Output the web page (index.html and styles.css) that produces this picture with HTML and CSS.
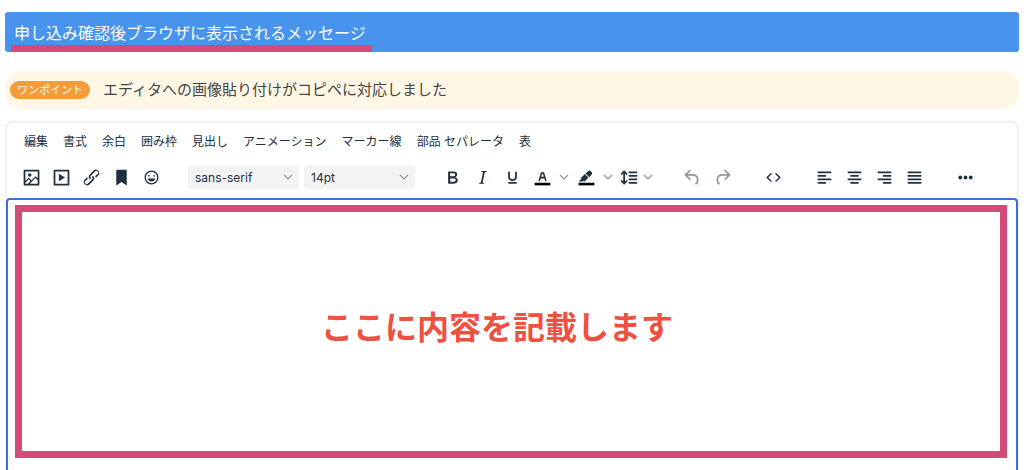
FILE: index.html
```
<!doctype html>
<html lang="ja">

<head>
  <meta charset="UTF-8" />
  <meta name="viewport" content="width=device-width, initial-scale=1.0" />
  <title>メッセージ編集</title>
  <link rel="stylesheet" href="styles.css">
</head>

<body>
  <h1 class="section-title"><span class="title-text">申し込み確認後ブラウザに表示されるメッセージ</span></h1>

  <p class="tip">
    <span class="tip-label">ワンポイント</span>
    <span>エディタへの画像貼り付けがコピペに対応しました</span>
  </p>

  <main class="editor">
    <div class="menubar" role="menubar">
      <button type="button" role="menuitem">編集</button>
      <button type="button" role="menuitem">書式</button>
      <button type="button" role="menuitem">余白</button>
      <button type="button" role="menuitem">囲み枠</button>
      <button type="button" role="menuitem">見出し</button>
      <button type="button" role="menuitem">アニメーション</button>
      <button type="button" role="menuitem">マーカー線</button>
      <button type="button" role="menuitem">部品 セパレータ</button>
      <button type="button" role="menuitem">表</button>
    </div>

    <div class="toolbar" role="toolbar">
      <div class="group">
        <button type="button" class="tool" aria-label="画像">
          <svg viewBox="0 0 24 24"><path fill-rule="evenodd" d="m5 15.7 3.3-3.2c.3-.3.7-.3 1 0L12 15l4.1-4c.3-.4.8-.4 1 0l2 1.9V5H5v10.7ZM5 18v1h3l2.8-2.9-2-2L5 17.9Zm14-3-2.5-2.4-6.4 6.4H19v-4ZM4 3h16c.6 0 1 .4 1 1v16c0 .6-.4 1-1 1H4a1 1 0 0 1-1-1V4c0-.6.4-1 1-1Zm6 8a2 2 0 1 0 0-4 2 2 0 0 0 0 4Z"/></svg>
        </button>
        <button type="button" class="tool" aria-label="動画">
          <svg viewBox="0 0 24 24"><path fill-rule="evenodd" d="M4 3h16c.6 0 1 .4 1 1v16c0 .6-.4 1-1 1H4a1 1 0 0 1-1-1V4c0-.6.4-1 1-1Zm1 2v14h14V5H5Zm4 2.600 7 4.400-7 4.400z"/></svg>
        </button>
        <button type="button" class="tool" aria-label="リンク">
          <svg viewBox="0 0 24 24"><path d="M6.200 12.300a1 1 0 0 1 1.400 1.400l-2 2a2 2 0 1 0 2.600 2.800l4.800-4.800a1 1 0 0 0 0-1.400 1 1 0 1 1 1.400-1.300 2.900 2.900 0 0 1 0 4L9.600 20a3.900 3.900 0 0 1-5.500-5.500l2-2Zm11.600-.6a1 1 0 0 1-1.400-1.400l2-2a2 2 0 1 0-2.600-2.800L11 10.300a1 1 0 0 0 0 1.400A1 1 0 1 1 9.600 13a2.900 2.900 0 0 1 0-4L14.400 4a3.900 3.900 0 0 1 5.500 5.500l-2 2Z"/></svg>
        </button>
        <button type="button" class="tool" aria-label="アンカー">
          <svg viewBox="0 0 24 24"><path d="M6 4v17l6-4 6 4V4c0-.6-.4-1-1-1H7a1 1 0 0 0-1 1Z"/></svg>
        </button>
        <button type="button" class="tool" aria-label="絵文字">
          <svg viewBox="0 0 24 24"><path fill-rule="evenodd" d="M9 11c.6 0 1-.4 1-1s-.4-1-1-1a1 1 0 0 0-1 1c0 .6.4 1 1 1Zm6 0c.6 0 1-.4 1-1s-.4-1-1-1a1 1 0 0 0-1 1c0 .6.4 1 1 1Zm-3 5.500c2.100 0 4-1.500 4.400-3.500H7.600c.5 2 2.300 3.500 4.400 3.500ZM12 4a8 8 0 1 0 0 16 8 8 0 0 0 0-16Zm0 14.500a6.500 6.500 0 1 1 0-13 6.500 6.500 0 0 1 0 13Z"/></svg>
        </button>
      </div>

      <div class="group selects">
        <div class="select-wrap">
          <select aria-label="フォント"><option>sans-serif</option></select>
          <svg class="chevron" viewBox="0 0 10 6"><path d="m1 1 4 4 4-4"/></svg>
        </div>
        <div class="select-wrap">
          <select aria-label="文字サイズ"><option>14pt</option></select>
          <svg class="chevron" viewBox="0 0 10 6"><path d="m1 1 4 4 4-4"/></svg>
        </div>
      </div>

      <div class="group">
        <button type="button" class="tool" aria-label="太字">
          <svg viewBox="0 0 24 24"><path fill-rule="evenodd" d="M7.800 19c-.3 0-.5 0-.6-.2l-.2-.5V5.700c0-.2 0-.4.2-.5l.6-.2h5c1.500 0 2.700.3 3.500 1 .7.600 1.100 1.400 1.100 2.500a3 3 0 0 1-.6 1.900c-.4.600-1 1-1.600 1.200.4.100.9.300 1.300.600s.8.700 1 1.200c.4.400.5 1 .5 1.600 0 1.300-.4 2.300-1.300 3-.8.700-2.100 1-3.800 1H7.800Zm5-8.300c.6 0 1.200-.1 1.600-.5.400-.3.600-.7.600-1.300 0-1.100-.8-1.700-2.300-1.700H9.300v3.500h3.400Zm.5 6c.7 0 1.300-.1 1.700-.4.400-.4.600-.9.600-1.500s-.2-1-.7-1.400c-.4-.3-1-.4-2-.4H9.400v3.800h4Z"/></svg>
        </button>
        <button type="button" class="tool" aria-label="斜体">
          <svg viewBox="0 0 24 24"><path d="m16.700 4.700-.1.900h-.3c-.6 0-1 0-1.400.3-.3.300-.4.600-.5 1.100l-2.100 9.800v.6c0 .5.400.8 1.400.8h.2l-.2.800H8l.2-.8h.2c1.100 0 1.800-.5 2-1.500l2-9.800.1-.5c0-.6-.4-.8-1.400-.8h-.3l.2-.9h5.700Z"/></svg>
        </button>
        <button type="button" class="tool" aria-label="下線">
          <svg viewBox="0 0 24 24"><path d="M16 5c.6 0 1 .4 1 1v5.500a4 4 0 0 1-.4 1.800l-1 1.400a5.300 5.300 0 0 1-5.500 1 5 5 0 0 1-1.600-1c-.5-.4-.8-.9-1.100-1.400a4 4 0 0 1-.4-1.800V6c0-.6.4-1 1-1s1 .4 1 1v5.500c0 .3 0 .6.2 1l.6.700a3.300 3.300 0 0 0 2.200.8 3.400 3.400 0 0 0 2.200-.8c.3-.2.400-.5.600-.8l.2-.9V6c0-.6.4-1 1-1ZM8 17h8c.6 0 1 .4 1 1s-.4 1-1 1H8a1 1 0 0 1 0-2Z"/></svg>
        </button>
        <button type="button" class="tool" aria-label="文字色">
          <svg viewBox="0 0 24 24"><path class="swatch" d="M3 18h18v3H3z"/><path fill-rule="evenodd" d="M8.700 16h-.8a.5.500 0 0 1-.5-.6l2.700-9c.1-.3.300-.4.500-.4h2.800c.2 0 .4.100.5.400l2.700 9a.5.500 0 0 1-.5.600h-.8a.5.500 0 0 1-.4-.4l-.7-2.200c0-.3-.3-.4-.5-.4h-3.400c-.2 0-.4.100-.5.400l-.7 2.200c0 .3-.2.400-.4.400Zm2.600-7.600-.6 2a.5.500 0 0 0 .5.600h1.600a.5.500 0 0 0 .5-.6l-.6-2c0-.3-.3-.4-.5-.4h-.4c-.2 0-.4.100-.5.400Z"/></svg>
        </button>
        <button type="button" class="tool-arrow" aria-label="文字色を選択">
          <svg class="chevron" viewBox="0 0 10 6"><path d="m1 1 4 4 4-4"/></svg>
        </button>
        <button type="button" class="tool" aria-label="背景色">
          <svg viewBox="0 0 24 24"><path class="swatch" d="M3 18h18v3H3z"/><path d="m7.700 16.700H3l3.300-3.300-.7-.8L10.200 8l4 4.100-4 4.200c-.2.200-.6.200-.8 0l-.6-.7-1.100 1.100Zm5-7.500L11 7.400l3-2.900a2 2 0 0 1 2.600 0L18 6c.7.700.7 2 0 2.700l-2.900 2.900-1.800-1.800-.5-.6Z"/></svg>
        </button>
        <button type="button" class="tool-arrow" aria-label="背景色を選択">
          <svg class="chevron" viewBox="0 0 10 6"><path d="m1 1 4 4 4-4"/></svg>
        </button>
        <button type="button" class="tool tool-narrow" aria-label="行の高さ">
          <svg viewBox="0 0 24 24"><path d="M21 5a1 1 0 0 1 .1 2H13a1 1 0 0 1-.1-2H21Zm0 4a1 1 0 0 1 .1 2H13a1 1 0 0 1-.1-2H21Zm0 4a1 1 0 0 1 .1 2H13a1 1 0 0 1-.1-2H21Zm0 4a1 1 0 0 1 .1 2H13a1 1 0 0 1-.1-2H21ZM7 3.600l3.700 3.700a1 1 0 0 1-1.300 1.500h-.1L8 7.300v9.200l1.300-1.300a1 1 0 0 1 1.300 0h.1c.4.400.4 1 0 1.300v.1L7 20.400l-3.700-3.700a1 1 0 0 1 1.300-1.500h.1L6 16.700V7.400L4.700 8.700a1 1 0 0 1-1.300 0h-.1a1 1 0 0 1 0-1.300v-.1L7 3.600Z"/></svg>
        </button>
        <button type="button" class="tool-arrow" aria-label="行の高さを選択">
          <svg class="chevron" viewBox="0 0 10 6"><path d="m1 1 4 4 4-4"/></svg>
        </button>
      </div>

      <div class="group">
        <button type="button" class="tool" aria-label="元に戻す" disabled>
          <svg viewBox="0 0 24 24"><path d="M6.400 8H12c3.700 0 6.200 2 6.800 5.100.6 2.700-.4 5.600-2.300 6.800a1 1 0 0 1-1-1.800c1.100-.6 1.800-2.700 1.400-4.600-.5-2.100-2.100-3.500-4.900-3.500H6.400l3.300 3.300a1 1 0 1 1-1.400 1.400l-5-5a1 1 0 0 1 0-1.400l5-5a1 1 0 0 1 1.400 1.400L6.400 8Z"/></svg>
        </button>
        <button type="button" class="tool" aria-label="やり直し" disabled>
          <svg viewBox="0 0 24 24"><path d="M17.600 10H12c-2.800 0-4.400 1.400-4.900 3.500-.4 2 .3 4 1.400 4.600a1 1 0 1 1-1 1.800c-2-1.200-2.900-4.100-2.300-6.800.6-3 3-5.100 6.800-5.100h5.600l-3.300-3.300a1 1 0 1 1 1.400-1.400l5 5a1 1 0 0 1 0 1.400l-5 5a1 1 0 0 1-1.400-1.400l3.300-3.300Z"/></svg>
        </button>
      </div>

      <div class="group">
        <button type="button" class="tool tool-compact" aria-label="ソースコード">
          <svg viewBox="0 0 24 24"><path d="M9.800 15.700c.3.300.3.800 0 1-.3.400-.9.400-1.200 0l-4.400-4.100a.8.800 0 0 1 0-1.200l4.400-4.200c.3-.3.900-.3 1.200 0 .3.300.3.800 0 1.100L6 12l3.800 3.700ZM14.200 15.700c-.3.300-.3.800 0 1 .4.400.9.400 1.200 0l4.400-4.100c.3-.3.300-.9 0-1.200l-4.400-4.200a.8.800 0 0 0-1.200 0c-.3.300-.3.800 0 1.100L18 12l-3.800 3.700Z"/></svg>
        </button>
      </div>

      <div class="group">
        <button type="button" class="tool" aria-label="左揃え">
          <svg class="lines" viewBox="0 0 24 24"><path d="M5 6h14M5 10h8M5 14h14M5 18h8"/></svg>
        </button>
        <button type="button" class="tool" aria-label="中央揃え">
          <svg class="lines" viewBox="0 0 24 24"><path d="M5 6h14M8 10h8M5 14h14M8 18h8"/></svg>
        </button>
        <button type="button" class="tool" aria-label="右揃え">
          <svg class="lines" viewBox="0 0 24 24"><path d="M5 6h14M11 10h8M5 14h14M11 18h8"/></svg>
        </button>
        <button type="button" class="tool" aria-label="両端揃え">
          <svg class="lines" viewBox="0 0 24 24"><path d="M5 6h14M5 10h14M5 14h14M5 18h14"/></svg>
        </button>
      </div>

      <div class="group">
        <button type="button" class="tool tool-compact" aria-label="その他">
          <svg viewBox="0 0 24 24"><circle cx="6" cy="12" r="2.200"/><circle cx="12" cy="12" r="2.200"/><circle cx="18" cy="12" r="2.200"/></svg>
        </button>
      </div>
    </div>

    <div class="edit-area">
      <div class="content" contenteditable="true" role="textbox" aria-label="メッセージ本文">ここに内容を記載します</div>
    </div>
  </main>
</body>

</html>
```
FILE: styles.css
```
* {
  box-sizing: border-box;
}

body {
  display: flex;
  flex-direction: column;
  min-height: 100vh;
  margin: 0;
  padding: 12px 5px 0;
  background-color: white;
  color: #222f3e;
  font-family: Inter, "Noto Sans CJK JP", sans-serif;
}

button {
  padding: 0;
  border: 0;
  background: none;
  color: inherit;
  font-family: inherit;
}

.section-title {
  display: flex;
  margin: 0;
  padding: 0 6px;
  border-radius: 3px;
  background-color: #4894ed;
  color: white;
  font-size: 16px;
  font-weight: 400;
  line-height: 24px;
}

.title-text {
  padding: 9px 6px 0 3px;
  border-bottom: 7px solid #d44a78;
}

.tip {
  display: flex;
  align-items: center;
  gap: 13px;
  margin: 19px 0 12px;
  padding: 7px 5px;
  border-radius: 16px;
  background-color: #fff7e5;
  color: #444;
  font-size: 15px;
  line-height: 24px;
}

.tip-label {
  padding: 0 7px;
  border-radius: 9px;
  background-color: #f39c38;
  color: white;
  font-size: 11px;
  line-height: 18px;
}

.editor {
  display: flex;
  flex: 1;
  flex-direction: column;
  border: 2px solid #f0f0f0;
  border-bottom: 0;
  border-radius: 8px 8px 0 0;
}

.menubar {
  display: flex;
  flex-wrap: wrap;
  gap: 15px;
  padding: 9px 17px 0;
}

.menubar button {
  font-size: 12px;
  line-height: 20px;
}

.toolbar {
  display: flex;
  flex-wrap: wrap;
  gap: 22px;
  padding: 10px 9px 6px;
}

.group {
  display: flex;
  align-items: center;
}

.selects {
  gap: 5px;
}

.tool {
  display: flex;
  align-items: center;
  justify-content: center;
  width: 30px;
  height: 30px;
}

.tool svg {
  width: 21px;
  height: 21px;
  fill: #222f3e;
}

.tool:disabled svg {
  opacity: 0.5;
}

.tool-narrow {
  width: 26px;
}

.tool-compact {
  width: 28px;
}

.tool .swatch {
  fill: black;
}

.tool .lines {
  fill: none;
  stroke: #222f3e;
  stroke-width: 2;
  stroke-linecap: round;
}

.tool-arrow {
  display: flex;
  align-items: center;
  justify-content: center;
  width: 14px;
  height: 30px;
}

.chevron {
  width: 10px;
  height: 6px;
  fill: none;
  stroke: #8d939b;
  stroke-width: 1.2;
}

/* the arrow shares the grid cell with its select */
.select-wrap {
  display: grid;
  align-items: center;
  width: 111px;
}

.select-wrap select,
.select-wrap .chevron {
  grid-area: 1 / 1;
}

.select-wrap .chevron {
  justify-self: end;
  margin-right: 6px;
  pointer-events: none;
}

.select-wrap select {
  width: 100%;
  height: 24px;
  padding: 0 7px;
  border: 0;
  border-radius: 3px;
  appearance: none;
  background-color: #f3f3f3;
  color: #222f3e;
  font-family: inherit;
  font-size: 12px;
}

.edit-area {
  display: flex;
  flex: 1;
  margin: 0 -1px;
  padding: 5px 9px 12px 7px;
  border: 2px solid #3b70dc;
  border-bottom: 0;
  border-radius: 4px 4px 0 0;
}

.content {
  display: flex;
  flex: 1;
  align-items: center;
  justify-content: center;
  padding: 0 28px 8px 0;
  border: 7px solid #d44a78;
  color: #ee5140;
  font-size: 32px;
  font-weight: 700;
  line-height: 48px;
  outline: none;
}
```
